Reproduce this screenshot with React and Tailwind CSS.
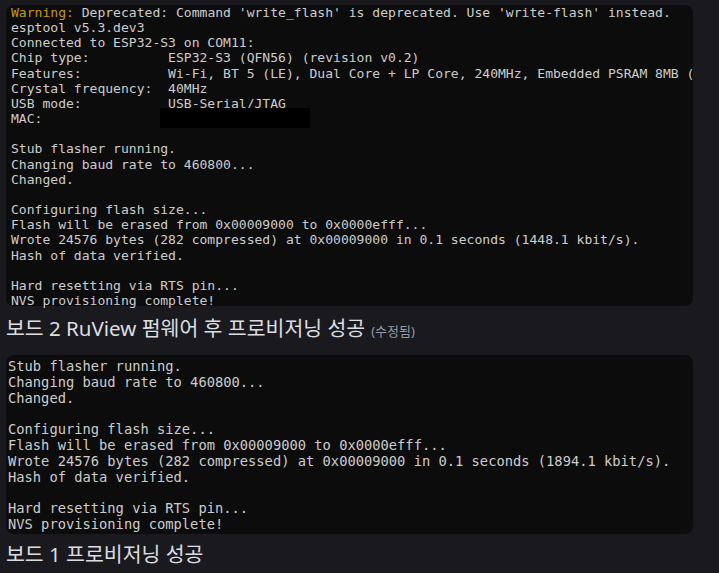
import React from 'react';

const mono = { fontFamily: '"DejaVu Sans Mono", "Liberation Mono", monospace' };

const log1 = [
  null,
  'esptool v5.3.dev3',
  'Connected to ESP32-S3 on COM11:',
  'Chip type:          ESP32-S3 (QFN56) (revision v0.2)',
  'Features:           Wi-Fi, BT 5 (LE), Dual Core + LP Core, 240MHz, Embedded PSRAM 8MB (AP_3v3)',
  'Crystal frequency:  40MHz',
  'USB mode:           USB-Serial/JTAG',
  'MAC:',
  '',
  'Stub flasher running.',
  'Changing baud rate to 460800...',
  'Changed.',
  '',
  'Configuring flash size...',
  'Flash will be erased from 0x00009000 to 0x0000efff...',
  'Wrote 24576 bytes (282 compressed) at 0x00009000 in 0.1 seconds (1448.1 kbit/s).',
  'Hash of data verified.',
  '',
  'Hard resetting via RTS pin...',
  'NVS provisioning complete!',
];

const log2 = [
  'Stub flasher running.',
  'Changing baud rate to 460800...',
  'Changed.',
  '',
  'Configuring flash size...',
  'Flash will be erased from 0x00009000 to 0x0000efff...',
  'Wrote 24576 bytes (282 compressed) at 0x00009000 in 0.1 seconds (1894.1 kbit/s).',
  'Hash of data verified.',
  '',
  'Hard resetting via RTS pin...',
  'NVS provisioning complete!',
];

function Terminal({ lines, className, textClass }) {
  return (
    <div className={`relative overflow-x-clip rounded-lg bg-[#0c0c0c] ${className}`}>
      <div className={`whitespace-pre text-[#cccccc] ${textClass}`} style={mono}>
        {lines.map((line, i) =>
          line === null ? (
            <div key={i}>
              <span className="text-[#c19c00]">Warning:</span> Deprecated: Command 'write_flash' is deprecated. Use 'write-flash' instead.
            </div>
          ) : (
            <div key={i}>{line || ' '}</div>
          )
        )}
      </div>
    </div>
  );
}

export default function App() {
  return (
    <div className="min-h-[573px] w-[719px] bg-[#1a1a1e] pl-[6px] pt-[6px]" style={{ fontFamily: '"Noto Sans", "Noto Sans CJK KR", sans-serif' }}>
      <div className="relative w-[687px]">
        <Terminal lines={log1} className="h-[301px] w-[687px]" textClass="-mt-[1px] h-[301px] pl-[5px] text-[13.05px] leading-[15.16px]" />
        {/* redacted MAC */}
        <div className="absolute left-[154px] top-[103px] h-[20px] w-[150px] bg-black" />
      </div>

      <div className="mt-[8px] flex items-baseline gap-[6px] leading-[28px]">
        <span className="text-[20.5px] text-[#dbdee1]">보드 2 RuView 펌웨어 후 프로비저닝 성공</span>
        <span className="text-[13px] text-[#949ba4]">(수정됨)</span>
      </div>

      <Terminal lines={log2} className="mt-[10px] h-[179px] w-[687px]" textClass="pl-[2px] pt-[4px] text-[13.75px] leading-[15.83px]" />

      <div className="mt-[6px] leading-[28px]">
        <span className="text-[20.5px] text-[#dbdee1]">보드 1 프로비저닝 성공</span>
      </div>
    </div>
  );
}
